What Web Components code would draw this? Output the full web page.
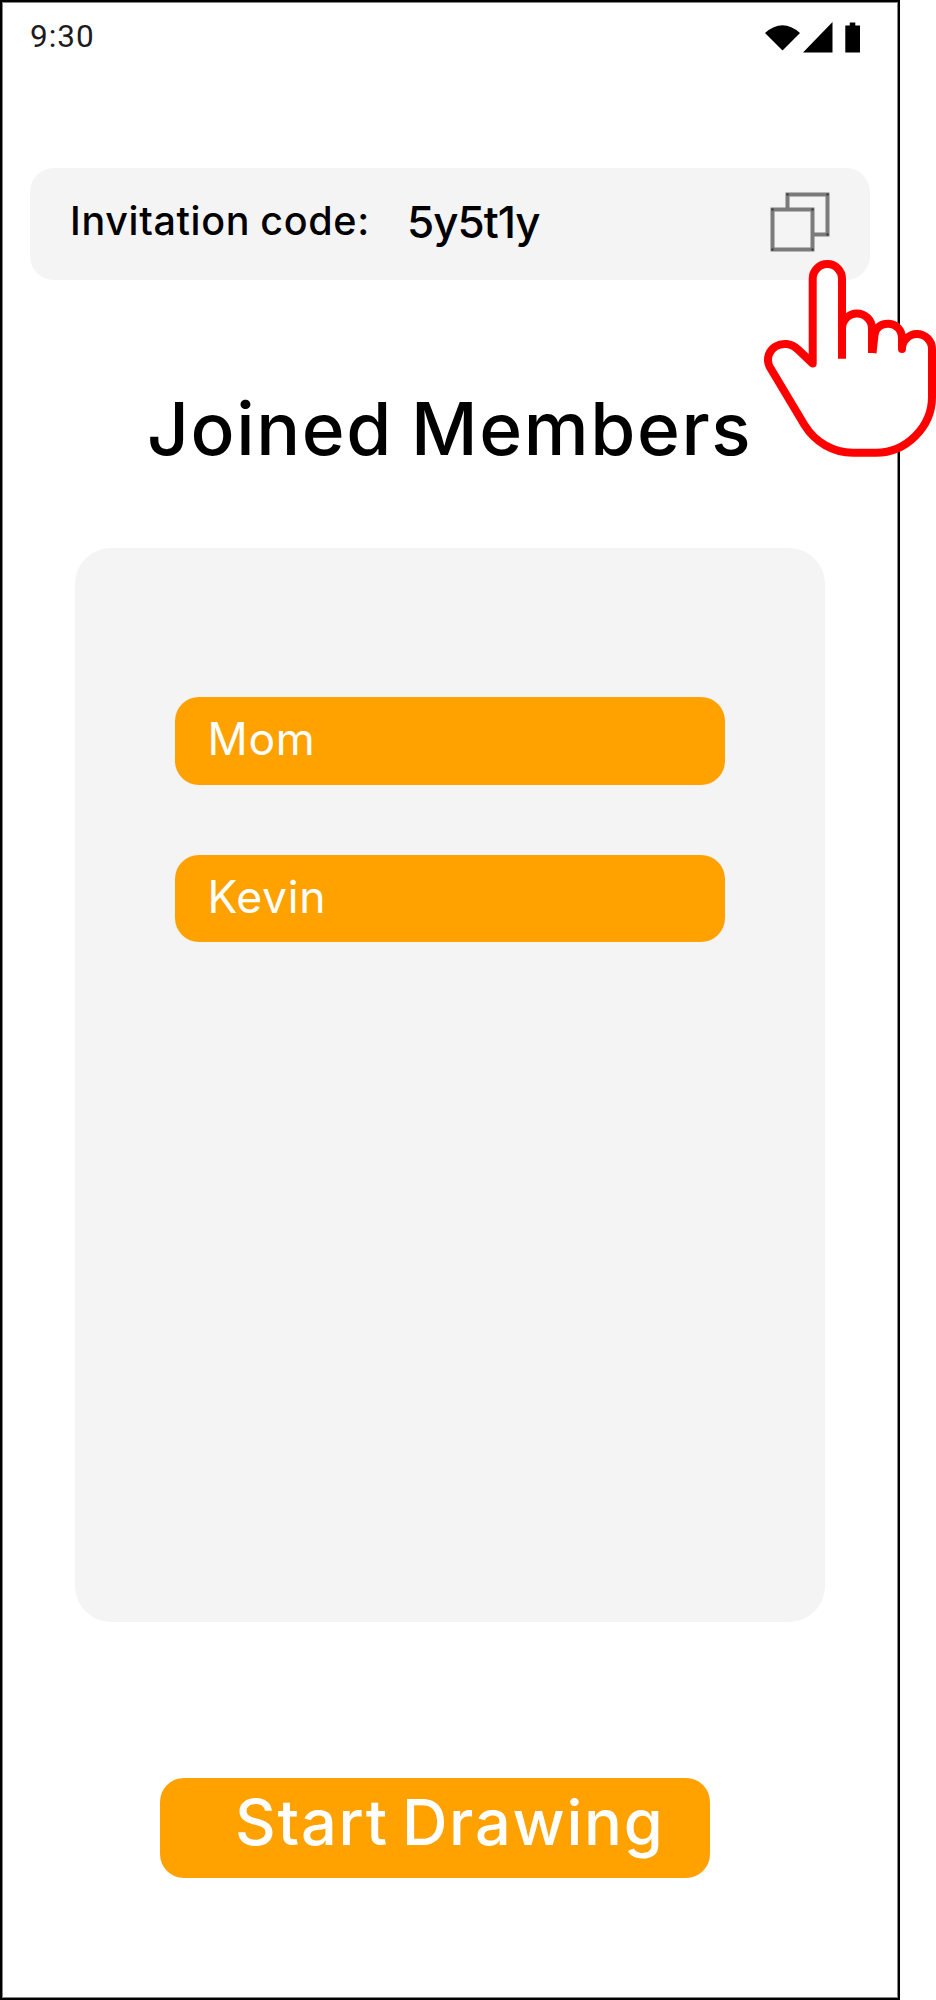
<!DOCTYPE html>
<html lang="en">
<head>
<meta charset="utf-8">
<title>Joined Members</title>
<style>
  body { margin: 0; background: #fff; font-family: Inter, "Liberation Sans", sans-serif; color: #000; }
</style>
</head>
<body>
<app-screen>
  <status-bar slot="status">9:30</status-bar>
  <invite-bar slot="invite"><span>Invitation code:</span><span slot="code">5y5t1y</span></invite-bar>
  <screen-title>Joined Members</screen-title>
  <member-list>
    <member-pill>Mom</member-pill>
    <member-pill>Kevin</member-pill>
  </member-list>
  <start-button slot="action">Start Drawing</start-button>
  <hand-pointer slot="pointer"></hand-pointer>
</app-screen>
<script>
const define = (name, html) => {
  const t = document.createElement('template');
  t.innerHTML = html;
  customElements.define(name, class extends HTMLElement {
    constructor() {
      super();
      this.attachShadow({ mode: 'open' }).append(t.content.cloneNode(true));
    }
  });
};

define('app-screen', `
  <style>
    :host { display: block; position: relative; width: 936px; height: 2000px; overflow: hidden; }
    .frame { box-sizing: border-box; width: 900px; height: 2000px; border: 2px solid #000;
      box-shadow: inset 0 0 0 1px #858585; display: flex; flex-direction: column; }
  </style>
  <div class="frame">
    <slot name="status"></slot><slot name="invite"></slot><slot></slot><slot name="action"></slot>
  </div>
  <slot name="pointer"></slot>`);

define('status-bar', `
  <style>
    :host { display: flex; justify-content: space-between; height: 70px; padding: 0 36px 0 28px;
      font: 31.5px/70px Roboto, sans-serif; letter-spacing: 1px; color: #1d1b20; }
    svg { display: block; margin-top: 18px; }
  </style>
  <span><slot></slot></span>
  <svg width="98" height="36" viewBox="764 20 98 36">
    <path fill="#000" d="M765 33Q782.500 17.500 800 33L782.500 50.500ZM803 52.500L832.500 22V52.500ZM845.300 25.500h4.500v-3h5.500v3h4.700v27h-14.700Z"/>
  </svg>`);

define('invite-bar', `
  <style>
    :host { box-sizing: border-box; display: flex; align-items: center; width: 840px; height: 112px;
      margin: 95.500px 0 0 28px; padding: 0 40px 0 40px; border-radius: 24px; background: #f4f4f4; }
    .label { width: 337px; font-size: 39.500px; font-weight: 500; line-height: 48px; white-space: nowrap; letter-spacing: .65px; word-spacing: -1px; margin-top: -5px; }
    .code { font-size: 44px; font-weight: 500; line-height: 48px; white-space: nowrap; letter-spacing: -1px; margin-top: -3px; }
    svg { display: block; margin-left: auto; margin-top: -3px; }
  </style>
  <span class="label"><slot></slot></span>
  <span class="code"><slot name="code"></slot></span>
  <svg width="60" height="60" viewBox="770 192.500 60 60">
    <g fill="none" stroke="#7b7b7b" stroke-width="4">
      <path d="M787.500 210V195h40v40H813"/><path d="M772.500 210h40v40h-40Z"/>
    </g>
    <path fill="#333" d="M786.500 194h2v2h-2zM826.500 194h2v2h-2zM826.500 234h2v2h-2zM771.500 209h2v2h-2zM811.500 209h2v2h-2zM771.500 249h2v2h-2zM811.500 249h2v2h-2z"/>
  </svg>`);

define('screen-title', `
  <style>
    :host { display: block; margin: 104px 0 0 145px; height: 90px; font-size: 73px; font-weight: 500; letter-spacing: 1.600px; word-spacing: -3px; line-height: 90px; white-space: nowrap; }
  </style><slot></slot>`);

define('member-list', `
  <style>
    :host { box-sizing: border-box; display: flex; flex-direction: column; gap: 70px; width: 750px; height: 1074.500px;
      margin: 74px 0 0 73px; padding: 149.500px 100px; border-radius: 36px; background: #f4f4f4; }
  </style><slot></slot>`);

define('member-pill', `
  <style>
    :host { box-sizing: border-box; display: block; height: 87.500px; padding-left: 32.500px; border-radius: 24px;
      background: #ffa200; color: #fff; font-size: 44.500px; letter-spacing: .7px; line-height: 85px; }
  </style><slot></slot>`);

define('start-button', `
  <style>
    :host { box-sizing: border-box; display: block; width: 550px; height: 100px; margin: 155.500px 0 0 158px; padding-left: 75px;
      border-radius: 24px; background: #ffa200; color: #fff; font-size: 63px; font-weight: 450; letter-spacing: 1.750px; word-spacing: -5.500px; line-height: 89px; white-space: nowrap; }
  </style><slot></slot>`);

define('hand-pointer', `
  <style>
    :host { display: block; position: absolute; left: 760px; top: 256px; }
    svg { display: block; }
  </style>
  <svg width="176" height="204" viewBox="760 256 176 204" stroke="red" stroke-width="8" stroke-linejoin="round">
    <path fill="#fff" d="M812.700 363.500V278.700a14.650 14.650 0 0 1 29.300 0V328.500a15 15 0 0 1 30 0C872 319.500 902 319.500 902 338.500V349a15 15 0 0 1 30 0V397C932 427 906 452.800 876 452.800H853C835 452.800 815 443 804 425L768.300 365.500C762 349 784 336 798.500 349Z" stroke="none"/>
    <g fill="none">
      <path d="M842 358.800V278.700a14.650 14.650 0 0 0-29.300 0V363.500L798 349.500C784 336 762 349 769.500 366.500L804.500 425C815 442 833 452.800 853 452.800H876C906 452.800 932 427 932 397V349a15 15 0 0 0-30 0"/>
      <path d="M842 328.500a15 15 0 0 1 30 0V353"/>
      <path d="M872.500 353L874.500 335C876 319.500 902 319.500 902 338.500V349" stroke-linecap="butt"/>
    </g>
    <circle cx="902" cy="349" r="4" fill="red" stroke="none"/>
  </svg>`);
</script>
</body>
</html>
